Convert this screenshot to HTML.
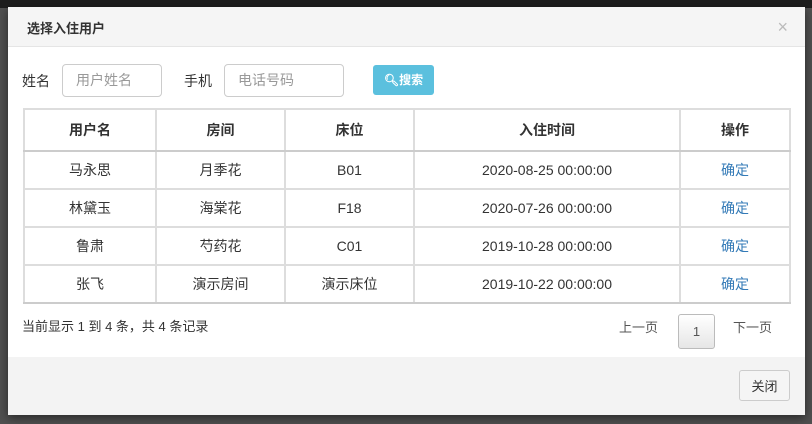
<!DOCTYPE html><html><head><meta charset="utf-8"><style>
body{margin:0;width:812px;height:424px;background:#505050;position:relative;overflow:hidden;font-family:"Liberation Sans","Noto Sans CJK SC",sans-serif;font-size:13px;color:#333}
.top{position:absolute;left:0;top:0;width:812px;height:8px;background:#1e1e1e}
.m{position:absolute;left:8px;top:7px;width:797px;height:408px;background:#fff;box-shadow:0 3px 9px rgba(0,0,0,.5)}
.hd{height:40px;background:#f5f5f5;border-bottom:1px solid #e5e5e5;box-sizing:border-box;padding:11px 0 0 19px;font-weight:bold;font-size:13px}
.x{position:absolute;right:17px;top:10px;color:#bbb;font-size:18px}
.lbl{position:absolute;top:64px;font-size:14px}
.in{position:absolute;top:57px;height:33px;border:1px solid #ccc;border-radius:4px;box-sizing:border-box;padding:0 13px;line-height:31px;color:#999;font-size:14px}
.btn{position:absolute;left:365px;top:58px;width:61px;height:30px;background:#5bc0de;border-radius:3px;color:#fff;font-size:12px;font-weight:bold;text-align:center;line-height:30px}
table{position:absolute;left:15px;top:101px;border-collapse:collapse;width:768px;font-size:14px}
td,th{border:2px solid #ddd;text-align:center;height:36px;padding:0}
th{height:40px;border-bottom:2px solid #ccc}
tr:last-child td{border-bottom-color:#ccc}
a{color:#337ab7;text-decoration:none}
.ft{position:absolute;left:0;top:350px;width:797px;height:58px;background:#f3f3f3}
.cb{position:absolute;right:15px;top:13px;width:51px;height:31px;border:1px solid #ccc;border-radius:3px;background:#f5f5f5;text-align:center;line-height:31px;box-sizing:border-box}
</style></head><body><div class="top"></div>
<div class="m"><div class="hd">选择入住用户</div><div class="x">×</div>
<div class="lbl" style="left:14px">姓名</div><div class="in" style="left:54px;width:100px">用户姓名</div>
<div class="lbl" style="left:176px">手机</div><div class="in" style="left:216px;width:120px">电话号码</div>
<div class="btn">&#x1F50D;&#xFE0E;搜索</div>
<table><tr><th style="width:130px">用户名</th><th style="width:127px">房间</th><th style="width:127px">床位</th><th style="width:264px">入住时间</th><th>操作</th></tr>
<tr><td>马永思</td><td>月季花</td><td>B01</td><td>2020-08-25 00:00:00</td><td><a>确定</a></td></tr>
<tr><td>林黛玉</td><td>海棠花</td><td>F18</td><td>2020-07-26 00:00:00</td><td><a>确定</a></td></tr>
<tr><td>鲁肃</td><td>芍药花</td><td>C01</td><td>2019-10-28 00:00:00</td><td><a>确定</a></td></tr>
<tr><td>张飞</td><td>演示房间</td><td>演示床位</td><td>2019-10-22 00:00:00</td><td><a>确定</a></td></tr></table>
<div style="position:absolute;left:14px;top:309px">当前显示 1 到 4 条，共 4 条记录</div>
<div style="position:absolute;left:611px;top:310px;color:#555">上一页</div>
<div style="position:absolute;left:670px;top:307px;width:37px;height:35px;border:1px solid #bbb;border-radius:3px;background:linear-gradient(#fff,#e6e6e6);box-sizing:border-box;text-align:center;line-height:33px;color:#555">1</div>
<div style="position:absolute;left:725px;top:310px;color:#555">下一页</div>
<div class="ft"><div class="cb">关闭</div></div></div>
</body></html>
